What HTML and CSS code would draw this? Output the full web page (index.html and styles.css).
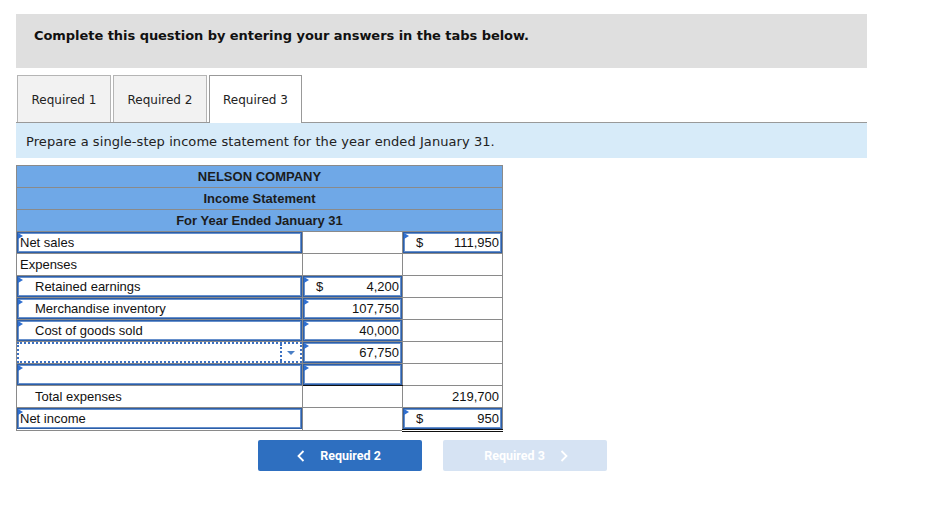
FILE: index.html
```html
<!DOCTYPE html>
<html>
<head>
<meta charset="utf-8">
<link rel="stylesheet" href="styles.css">
</head>
<body>
<div class="page">
  <div class="banner">Complete this question by entering your answers in the tabs below.</div>
  <div class="tabs">
    <div class="tab">Required 1</div>
    <div class="tab">Required 2</div>
    <div class="tab active">Required 3</div>
  </div>
  <div class="prompt">Prepare a single-step income statement for the year ended January 31.</div>

  <table class="stmt">
    <colgroup><col class="c1"><col class="c2"><col class="c3"></colgroup>
    <tr class="head"><td colspan="3"><div class="cell">NELSON COMPANY</div></td></tr>
    <tr class="head"><td colspan="3"><div class="cell">Income Statement</div></td></tr>
    <tr class="head"><td colspan="3"><div class="cell">For Year Ended January 31</div></td></tr>
    <tr>
      <td><div class="inp flag">Net sales</div></td>
      <td><div class="cell"></div></td>
      <td><div class="inp flag money"><span class="cur">$</span><span>111,950</span></div></td>
    </tr>
    <tr>
      <td><div class="cell txt">Expenses</div></td>
      <td><div class="cell"></div></td>
      <td><div class="cell"></div></td>
    </tr>
    <tr>
      <td><div class="inp flag ind">Retained earnings</div></td>
      <td><div class="inp flag money"><span class="cur">$</span><span>4,200</span></div></td>
      <td><div class="cell"></div></td>
    </tr>
    <tr>
      <td><div class="inp flag ind">Merchandise inventory</div></td>
      <td><div class="inp flag money"><span></span><span>107,750</span></div></td>
      <td><div class="cell"></div></td>
    </tr>
    <tr>
      <td><div class="inp flag ind">Cost of goods sold</div></td>
      <td><div class="inp flag money"><span></span><span>40,000</span></div></td>
      <td><div class="cell"></div></td>
    </tr>
    <tr>
      <td><div class="sel"><span class="sel-text"></span><span class="drop"><span class="arrow"></span></span></div></td>
      <td><div class="inp flag money"><span></span><span>67,750</span></div></td>
      <td><div class="cell"></div></td>
    </tr>
    <tr>
      <td><div class="inp flag"></div></td>
      <td class="underline"><div class="inp flag"></div></td>
      <td><div class="cell"></div></td>
    </tr>
    <tr>
      <td><div class="cell txt ind">Total expenses</div></td>
      <td><div class="cell"></div></td>
      <td><div class="cell num">219,700</div></td>
    </tr>
    <tr>
      <td><div class="inp flag">Net income</div></td>
      <td><div class="cell"></div></td>
      <td class="double"><div class="inp flag money"><span class="cur">$</span><span>950</span></div></td>
    </tr>
  </table>

  <div class="nav">
    <div class="btn prev">
      <svg class="chev" width="8" height="12" viewBox="0 0 8 12"><path d="M6.5 1 L1.5 6 L6.5 11" fill="none" stroke="#fff" stroke-width="1.8"/></svg>
      <span>Required 2</span>
    </div>
    <div class="btn next">
      <span>Required 3</span>
      <svg class="chev" width="8" height="12" viewBox="0 0 8 12"><path d="M1.5 1 L6.5 6 L1.5 11" fill="none" stroke="#fff" stroke-width="1.8"/></svg>
    </div>
  </div>
</div>
</body>
</html>
```

FILE: styles.css
```css
html, body {
  margin: 0;
  padding: 0;
  background: #fff;
}

.page {
  width: 851px;
  padding: 14px 0 0 16px;
  font-family: "DejaVu Sans", Verdana, sans-serif;
}

.banner {
  height: 54px;
  box-sizing: border-box;
  background: #dfdfdf;
  padding: 14px 0 0 18px;
  line-height: 16px;
  font-weight: bold;
  font-size: 13px;
  color: #111;
  letter-spacing: -0.05px;
}

.tabs {
  margin-top: 7px;
  display: flex;
  gap: 2px;
  padding-left: 1px;
  border-bottom: 1px solid #999;
  height: 47px;
}

.tab {
  box-sizing: border-box;
  width: 94px;
  height: 47px;
  border: 1px solid #b5b5b5;
  border-bottom: none;
  background: #f2f2f2;
  display: flex;
  align-items: center;
  justify-content: center;
  padding-top: 2px;
  font-size: 12px;
  color: #222;
}

.tab.active {
  background: #fff;
  border-color: #999;
  height: 48px;
  width: 93px;
  padding-top: 0;
}

.prompt {
  height: 35px;
  box-sizing: border-box;
  background: #d7ebf9;
  padding: 11px 0 0 10px;
  line-height: 16px;
  font-size: 13px;
  color: #222;
  letter-spacing: 0.07px;
}

.stmt {
  margin-top: 7px;
  border-collapse: collapse;
  table-layout: fixed;
  width: 486px;
  font-family: "Liberation Sans", Arial, sans-serif;
  font-size: 13px;
  color: #111;
}

.c1 { width: 286px; }
.c2 { width: 100px; }
.c3 { width: 100px; }

.stmt td {
  border: 1px solid #8a8a8a;
  padding: 0;
  vertical-align: top;
}

.stmt td.underline { border-bottom: 1px solid #111; }
.stmt td.double { border-bottom: 3px double #111; }

.head td {
  background: #6fa8e7;
  text-align: center;
  font-weight: bold;
  color: #1c1c1c;
}

.cell {
  height: 21px;
  line-height: 22px;
  box-sizing: border-box;
}

.txt { padding-left: 3px; }
.ind { padding-left: 18px; }
.num { text-align: right; padding-right: 3px; }

.inp {
  position: relative;
  height: 21px;
  line-height: 20px;
  box-sizing: border-box;
  border: 1px solid #2d5ea7;
  box-shadow: inset 0 0 0 1px #6690cc;
  padding-left: 2px;
  white-space: nowrap;
}

.inp.ind { padding-left: 17px; }

.flag::before {
  content: "";
  position: absolute;
  left: 0;
  top: 0;
  width: 0;
  height: 0;
  border-top: 3px solid transparent;
  border-bottom: 3px solid transparent;
  border-left: 5px solid #2f6fd0;
}

.money {
  display: flex;
  justify-content: space-between;
  padding-left: 12px;
  padding-right: 2px;
}

.sel {
  height: 21px;
  box-sizing: border-box;
  border: 2px dotted #3b70c2;
  display: flex;
}

.sel-text { flex: 1; }

.drop {
  width: 18px;
  border-left: 2px dotted #3b70c2;
  display: flex;
  align-items: center;
  justify-content: center;
}

.arrow {
  width: 0;
  height: 0;
  border-left: 4px solid transparent;
  border-right: 4px solid transparent;
  border-top: 4px solid #4a7fc6;
}

.nav {
  margin-top: 8px;
  margin-left: 242px;
  display: flex;
  gap: 21px;
}

.btn {
  width: 164px;
  height: 31px;
  box-sizing: border-box;
  border-radius: 2px;
  display: flex;
  align-items: center;
  justify-content: center;
  font-family: Roboto, "Liberation Sans", sans-serif;
  font-weight: bold;
  font-size: 12.5px;
  color: #fff;
  gap: 15px;
}

.prev { background: #2e6fc0; padding-right: 2px; }
.next { background: #d6e3f3; padding-left: 2px; }
```
